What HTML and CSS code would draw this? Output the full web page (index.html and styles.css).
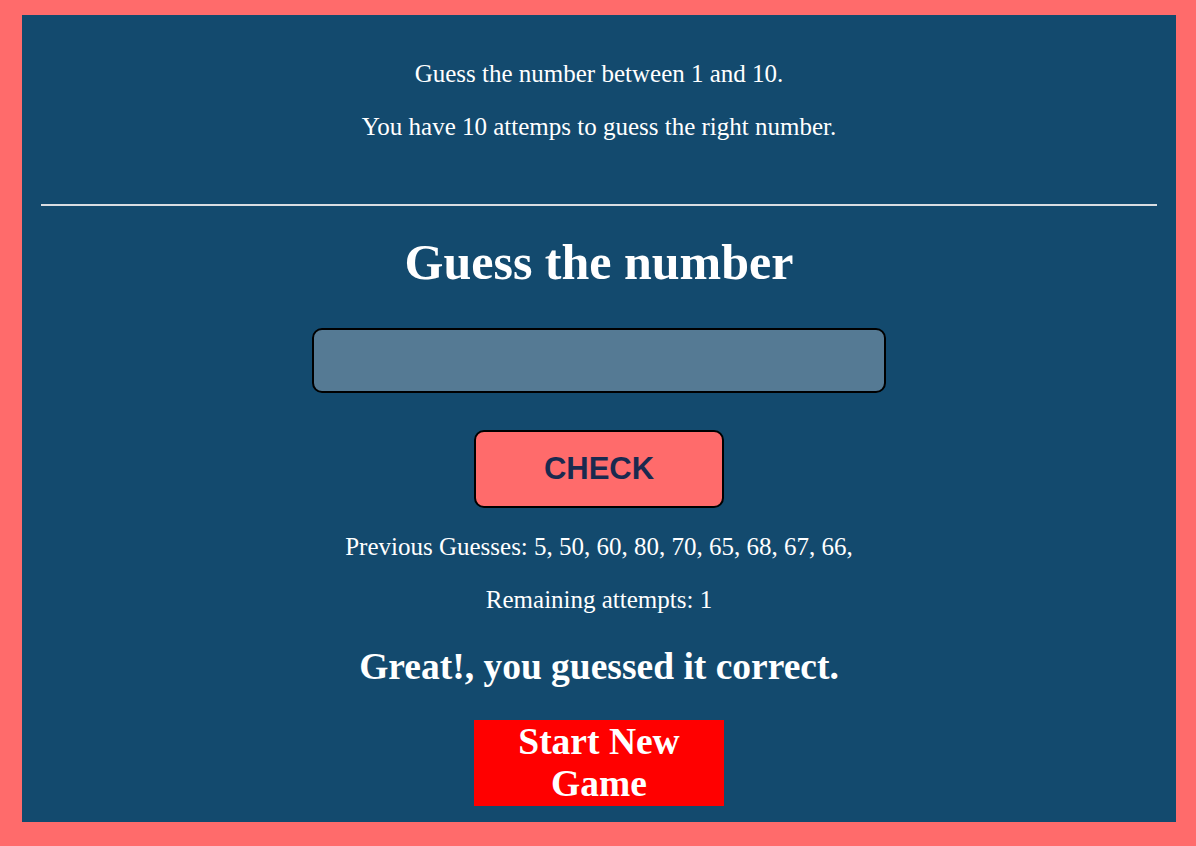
FILE: index.html
```html
<!DOCTYPE html>
<html>
<head>
<meta charset="utf-8">
<link rel="stylesheet" href="styles.css">
</head>
<body>
<main class="panel">
  <section class="intro">
    <p>Guess the number between 1 and 10.</p>
    <p>You have 10 attemps to guess the right number.</p>
  </section>
  <hr class="rule">
  <h1 class="title">Guess the number</h1>
  <div class="form">
    <input class="guess-input" type="text">
    <button class="check-btn">CHECK</button>
  </div>
  <p class="info">Previous Guesses: 5, 50, 60, 80, 70, 65, 68, 67, 66,</p>
  <p class="info">Remaining attempts: 1</p>
  <p class="result">Great!, you guessed it correct.</p>
  <button class="new-game">Start New Game</button>
</main>
</body>
</html>
```
FILE: styles.css
```css
html, body {
  margin: 0;
  background: #ff6b6b;
}
body {
  padding: 15px 20px 24px 22px;
  font-family: "Liberation Serif", "Times New Roman", serif;
  color: #ffffff;
}
.panel {
  background: #134a6e;
  height: 807px;
  box-sizing: border-box;
  padding: 44px 19px 0;
  display: flex;
  flex-direction: column;
  align-items: center;
  text-align: center;
}
.intro {
  height: 145px;
}
.intro p {
  margin: 0 0 24px;
  font-size: 25px;
  line-height: 29px;
}
.rule {
  width: 100%;
  margin: 0;
  border: none;
  border-top: 2px solid #d9dde2;
}
.title {
  margin: 28px 0 0;
  font-size: 50px;
  line-height: 56px;
  font-weight: bold;
}
.form {
  display: flex;
  flex-direction: column;
  align-items: center;
  margin-top: 38px;
}
.guess-input {
  width: 574px;
  height: 65px;
  box-sizing: border-box;
  border: 2px solid #000;
  border-radius: 10px;
  background: #557a94;
  color: #fff;
  font-size: 24px;
  outline: none;
}
.check-btn {
  margin-top: 37px;
  width: 250px;
  height: 78px;
  box-sizing: border-box;
  border: 2px solid #000;
  border-radius: 10px;
  background: #ff6b6b;
  color: #1a2a4f;
  font-family: "Liberation Sans", Arial, sans-serif;
  font-weight: bold;
  font-size: 31px;
}
.info {
  margin: 24px 0 0;
  font-size: 25px;
  line-height: 29px;
}
.info + .info {
  margin-top: 24px;
}
.result {
  margin: 32px 0 0;
  font-size: 37.5px;
  line-height: 42px;
  font-weight: bold;
}
.new-game {
  margin-top: 32px;
  width: 250px;
  height: 86px;
  border: none;
  background: #ff0000;
  color: #fff;
  font-family: "Liberation Serif", "Times New Roman", serif;
  font-weight: bold;
  font-size: 37.5px;
  line-height: 42px;
  padding: 0 10px;
}
```
